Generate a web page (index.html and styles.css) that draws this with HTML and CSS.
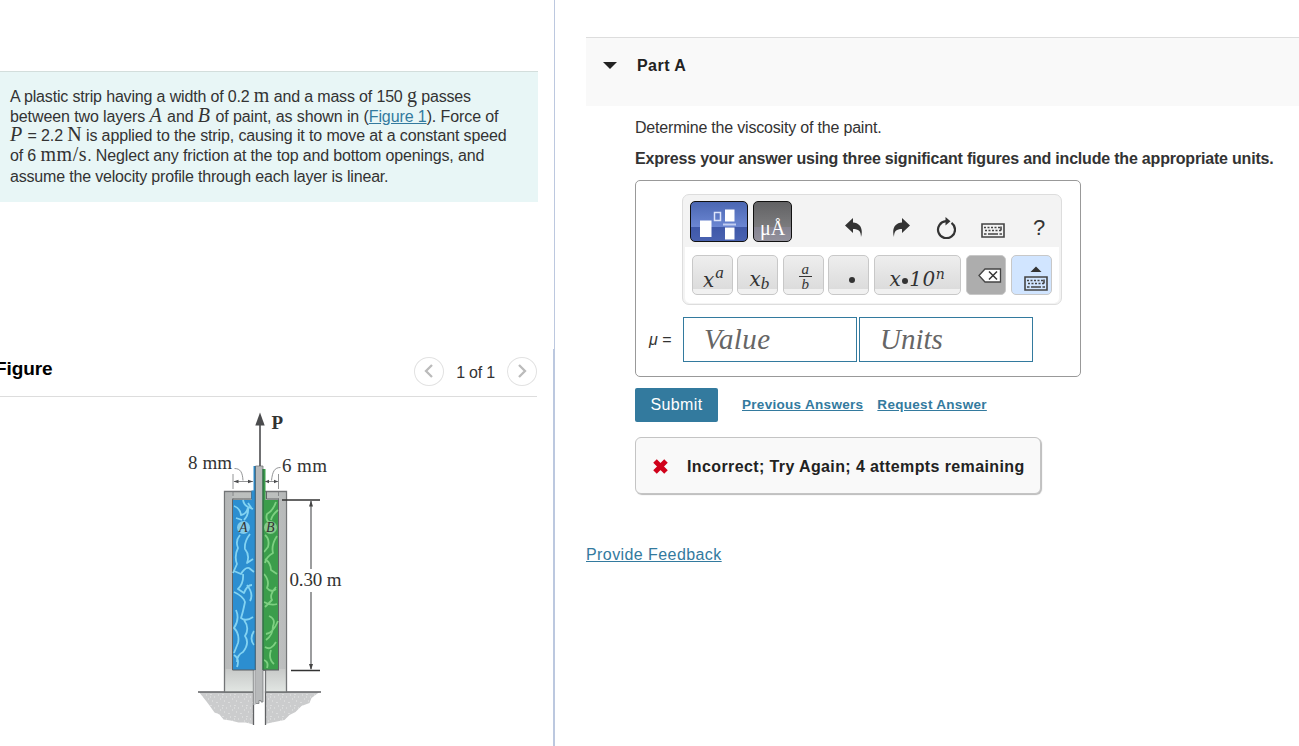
FILE: index.html
```html
<!DOCTYPE html>
<html lang="en">

<head>
  <meta charset="utf-8">
  <title>Part A</title>
  <link rel="stylesheet" href="styles.css">
</head>

<body>
  <div class="page">
    <div class="left">
      <div class="problem">
        <div class="line l1">A plastic strip having a width of 0.2 <span class="unit">m</span> and a mass of 150 <span class="unit">g</span> passes</div>
        <div class="line l2">between two layers <i class="var">A</i> and <i class="var">B</i> of paint, as shown in (<a href="#">Figure 1</a>). Force of</div>
        <div class="line l3"><i class="var">P</i> = 2.2 <span class="unit">N</span> is applied to the strip, causing it to move at a constant speed</div>
        <div class="line l4">of 6 <span class="unit">mm/s</span>. Neglect any friction at the top and bottom openings, and</div>
        <div class="line l5">assume the velocity profile through each layer is linear.</div>
      </div>

      <div class="figure-panel">
        <div class="figure-header">
          <h2>Figure</h2>
          <div class="pager">
            <button class="round"><svg width="10" height="14" viewBox="0 0 10 14"><path d="M8 1L2 7l6 6" /></svg></button>
            <span>1 of 1</span>
            <button class="round"><svg width="10" height="14" viewBox="0 0 10 14"><path d="M2 1l6 6-6 6" /></svg></button>
          </div>
        </div>

        <svg class="figure" width="180" height="340" viewBox="180 400 180 340">
          <defs>
            <linearGradient id="wall" x1="0" x2="1" y1="0" y2="0">
              <stop offset="0" stop-color="#a9abac" />
              <stop offset=".5" stop-color="#c9cbcc" />
              <stop offset="1" stop-color="#b0b2b3" />
            </linearGradient>
            <linearGradient id="base" x1="0" x2="0" y1="0" y2="1">
              <stop offset="0" stop-color="#bcbfbe" />
              <stop offset=".88" stop-color="#c6c8c7" />
              <stop offset="1" stop-color="#e2e6e3" />
            </linearGradient>
            <pattern id="gravel" width="12" height="11" patternUnits="userSpaceOnUse">
              <rect width="12" height="11" fill="#cbcccd" />
              <path d="M2 2h1M7 1v1M10 4h1M4 6h1M8 8h1M1 9v1M6 4h1" stroke="#e7e8e8" stroke-width="1.2" />
            </pattern>
          </defs>

          <!-- ground -->
          <path d="M199 692h54.500v32.500l-8-2-7 0-8-2-7-1-4-5-5-2-5-7-3-4-4-5z" fill="url(#gravel)" />
          <path d="M265 692h54.500l-8 6-2 5-8 3-6 6-6 3-5 5-10 2-9.500 2z" fill="url(#gravel)" />
          <path d="M198 692h55.500v33M265.500 725v-33H321" fill="none" stroke="#606264" stroke-width="1.300" />

          <!-- casing -->
          <path d="M224.500 491.500h62V692h-21v-22h-12v22h-29z" fill="url(#base)" stroke="#737577" stroke-width="1.300" />
          <path d="M225.500 492.500h6.500V669h-6.500zM279 492.500h6.500V669H279z" fill="url(#wall)" opacity=".5" />
          <path d="M251.500 491.500v7.500H232.500v171M266.500 491.500v7.500H278.500v171" fill="none" stroke="#606264" />

          <!-- paint -->
          <path d="M233 500h18.500v-9.500h2V466h2v204H233z" fill="#2c8ed0" />
          <path d="M263 469h2.500v31H278v170h-15z" fill="#3b9d4b" />
          <path class="wave-a" d="M234 506q6 2 7 9q6-1 7-8l5 2M243 500q1 5 5 7q1 8-4 13M248 503l4 6M236 518l6 2M240 535q-5 6-2 13q-4 8-1 16l-4 9M250 534q-6 8-5 15q5 6 2 14l6-4M234 571l7 3q4-7 8-6l5 4M243 574q1 9-5 15l6 4q3-8 8-8M234 592q9 4 11 10q-2 10-4 16q5 4 12-1M247 585q7 9 3 16M236 610q4 9-2 18q6 6 4 15l-4 10M244 620q6 8 1 16q5 7-2 16q-6 3-6 10M254 631q-5 8 0 14M234 655q6 4 3 12" />
          <path class="wave-b" d="M276 502q-3 9-9 12q-2 6 3 9M278 510q-6 5-7 10M265 535q5 4 3 12l-4 5M277 536q-6 9-4 17q-7 4-8 10M265 559q6 4 6 11l6 4M264 574q6 7 3 14q4 5 9 1M276 587q-7 8-4 13l-7 7M264 602q7 4 13 2M269 616q7 3 4 10q0 9-7 14M278 621q-5 12-12 13M265 647q6 4 11-5M271 650q-3 9 3 14M264 660q5 2 3 8" />

          <!-- strip -->
          <path d="M255.500 466h7.500v236h-2v-1.500h-2v3h-3.500z" fill="#b7b9ba" stroke="#77797b" stroke-width=".8" />
          <path d="M253.500 670h2v35h-2z" fill="#c8cacb" />
          <path d="M255.200 466v204" stroke="#285c7b" stroke-width=".8" />
          <path d="M263 469v201" stroke="#206f3a" stroke-width="1.200" />
          <path d="M232.500 670h22M263 670h16" stroke="#5b5d60" />

          <circle cx="243.500" cy="527.500" r="6.500" fill="#82cbea" />
          <circle cx="270.500" cy="527.500" r="6.500" fill="#86c98c" />
          <text class="tag" x="239" y="532">A</text>
          <text class="tag" x="266" y="532">B</text>

          <!-- force -->
          <path d="M260 466v-42" stroke="#4b4c4e" stroke-width="1.600" />
          <path d="M260 412.500l4.700 13h-9.400z" fill="#4b4c4e" />
          <text class="force" x="271.500" y="429">P</text>

          <!-- dimensions -->
          <path d="M233 474v26M278.500 474v26" stroke="#77797b" stroke-width=".8" stroke-dasharray="15 2 5 2" />
          <path d="M234 481.500h19M265 481.500h13" stroke="#77797b" stroke-width=".8" />
          <path d="M233.500 481.500l5-1.700v3.400zM253 481.500l-5-1.700v3.400zM265 481.500l4-1.700v3.400zM278 481.500l-4-1.700v3.400z" fill="#4b4c4e" />
          <path d="M234.500 468.500c6 0 8 4 8.500 12M280.500 467.500c-6 0-8 4-9 13" fill="none" stroke="#77797b" stroke-width=".8" />
          <path d="M282 500h38M291 670.500h29" stroke="#333" stroke-width="1.300" />
          <path d="M311 501v68M311 592v77" stroke="#67696b" stroke-width="1.300" />
          <path d="M311 500.500l2 6h-4zM311 670l2-6h-4z" fill="#444" />
          <text class="dim" x="188" y="469" textLength="44">8 mm</text>
          <text class="dim" x="282" y="472" textLength="45">6 mm</text>
          <text class="dim" x="289.500" y="586" textLength="52">0.30 m</text>
        </svg>
      </div>
    </div>

    <div class="right">
      <div class="part-header">
        <span class="caret"></span>
        <h3>Part A</h3>
      </div>

      <div class="part-body">
        <p class="question">Determine the viscosity of the paint.</p>
        <p class="instructions">Express your answer using three significant figures and include the appropriate units.</p>

        <div class="answer-box">
          <div class="toolbar">
            <div class="tools-top">
              <button class="template">
                <svg width="56" height="39" viewBox="0 0 56 39">
                  <path d="M9 18.500h11.500v16.500H9zM34 7.500h9.500v12H34zM34 25.500h9.500v12H34z" fill="#fff" />
                  <path d="M23.500 10.500h6v8h-6z" fill="none" stroke="#dce4fa" stroke-width="1.500" />
                  <path d="M32 22.500h13" stroke="#c3cff2" stroke-width="2" />
                </svg>
              </button>
              <button class="symbols">μÅ</button>
              <div class="actions">
                <svg width="18" height="20" viewBox="0 0 18 20"><path d="M0 7.500L8 0v4.500c7 .5 10.500 6 8 14.500 0-6-2.500-8-8-8V15z" fill="#333" /></svg>
                <svg width="18" height="20" viewBox="0 0 18 20"><path d="M17 7.500L9 0v4.500C2 5-1.500 10.500 1 19c0-6 2.500-8 8-8V15z" fill="#333" /></svg>
                <svg width="20" height="22" viewBox="0 0 20 22">
                  <path d="M15.500 5.800A8.500 8.500 0 1 1 10 4.200" fill="none" stroke="#333" stroke-width="2.200" />
                  <path d="M9.500 0l5 4.200-5 4.300z" fill="#333" />
                </svg>
                <svg class="kbd" width="24" height="15" viewBox="0 0 24 15">
                  <path d="M1 1h22v13H1z" />
                  <path d="M3 4.500h16M4 7.500h16" stroke-dasharray="2 1.500" />
                  <path d="M3 11h2.500M7 11h10M18.500 11H21M20 3.500v4" />
                </svg>
                <span class="help">?</span>
              </div>
            </div>

            <div class="tools-bottom">
              <button class="key"><span class="math sup"><b>x</b><i>a</i></span></button>
              <button class="key"><span class="math sub"><b>x</b><i>b</i></span></button>
              <button class="key"><span class="frac"><i>a</i><i>b</i></span></button>
              <button class="key"><span class="dot"></span></button>
              <button class="key wide"><span class="sci">x<span class="dot"></span>10<sup>n</sup></span></button>
              <button class="key delete">
                <svg width="24" height="15" viewBox="0 0 24 15">
                  <path d="M1 7.500L7 1h15.500v13H7z" fill="#fff" stroke="#444" stroke-width="1.300" />
                  <path d="M11 3.500l8 8M19 3.500l-8 8" stroke="#333" stroke-width="1.500" />
                </svg>
              </button>
              <button class="key toggle">
                <svg class="kbd" width="24" height="25" viewBox="0 -10 24 25">
                  <path class="up" d="M6.500-4l5.500-5.500L17.500-4z" />
                  <path d="M1 1h22v13H1z" />
                  <path d="M3 4.500h16M4 7.500h16" stroke-dasharray="2 1.500" />
                  <path d="M3 11h2.500M7 11h10M18.500 11H21M20 3.500v4" />
                </svg>
              </button>
            </div>
          </div>

          <div class="entry">
            <label><i>μ</i> =</label>
            <div class="field value">Value</div>
            <div class="field">Units</div>
          </div>
        </div>

        <div class="submit-row">
          <button class="submit">Submit</button>
          <a href="#">Previous Answers</a>
          <a href="#">Request Answer</a>
        </div>

        <div class="result">
          <svg width="17" height="17" viewBox="0 0 17 17"><path d="M3 3l11 11M14 3L3 14" stroke="#d0021b" stroke-width="5" /></svg>
          <span>Incorrect; Try Again; 4 attempts remaining</span>
        </div>
      </div>

      <a class="feedback" href="#">Provide Feedback</a>
    </div>
  </div>
</body>

</html>
```

FILE: styles.css
```css
* {
  box-sizing: border-box;
}

body {
  margin: 0;
  font-family: "Liberation Sans", Arial, sans-serif;
  font-size: 16px;
  color: #333;
  background: #fff;
  overflow: hidden;
}

a {
  color: #337a9e;
}

button {
  padding: 0;
  font-family: inherit;
}

svg {
  display: block;
  flex: none;
}

.page {
  display: flex;
  height: 746px;
}

.left {
  width: 555px;
  flex: none;
  padding-top: 71px;
  border-right: 1px solid #bcc8df;
}

/* problem statement */
.problem {
  width: 538px;
  height: 131px;
  padding: 15px 0 0 10px;
  border-top: 1px solid #d3dedc;
  background: #e8f6f6;
}

.line {
  height: 20px;
  line-height: 20px;
  white-space: nowrap;
  letter-spacing: -0.18px;
}

.l1 {
  letter-spacing: -0.16px;
}

.l2 {
  height: 19px;
  letter-spacing: -0.1px;
}

.l3 {
  letter-spacing: -0.13px;
}

.l4 {
  height: 21px;
  letter-spacing: -0.15px;
}

.unit,
.var {
  font-family: "Liberation Serif", serif;
  font-size: 20px;
  line-height: 1px;
  letter-spacing: 0;
}

.var {
  letter-spacing: 1px;
}

.l4 .unit {
  letter-spacing: 0.6px;
}

/* figure */
.figure-panel {
  height: 397px;
  margin-top: 147px;
  border-right: 1px solid #bcc8df;
}

.figure-header {
  display: flex;
  justify-content: space-between;
  width: 537px;
  height: 48px;
  border-bottom: 1px solid #ddd;
}

h2 {
  margin: 9px 0 0 -5px;
  font-size: 19px;
  line-height: 22px;
  letter-spacing: -0.1px;
  color: #000;
}

.pager {
  display: flex;
  align-items: center;
  gap: 12px;
  height: 30px;
  margin-top: 7px;
}

.pager span {
  padding-top: 3px;
  letter-spacing: -0.2px;
}

.round {
  display: flex;
  align-items: center;
  justify-content: center;
  width: 30px;
  height: 29px;
  border: 1px solid #e2e2e2;
  border-radius: 50%;
  background: #fff;
}

.round path {
  fill: none;
  stroke: #bbb;
  stroke-width: 2.3;
}

.figure {
  margin: 3px 0 0 180px;
}

.figure text {
  font-family: "Liberation Serif", serif;
  fill: #333;
}

.figure .dim {
  font-size: 19px;
}

.figure .force {
  font-size: 19px;
  font-weight: bold;
}

.figure .tag {
  font-size: 14px;
  font-style: italic;
}

.wave-a,
.wave-b {
  fill: none;
  stroke: #83d3f2;
  stroke-width: 1.8;
  stroke-linejoin: round;
}

.wave-b {
  stroke: #7ed082;
}

/* right column */
.right {
  flex: 1;
  padding: 37px 0 0 31px;
}

.part-header {
  display: flex;
  height: 69px;
  padding: 17px 0 0 17px;
  border-top: 1px solid #ddd;
  background: #f9f9f9;
}

.caret {
  margin: 7px 20px 0 0;
  border: 7px solid transparent;
  border-top: 7px solid #222;
  border-bottom: 0;
  height: 0;
}

h3 {
  margin: 1px 0 0;
  font-size: 16px;
  line-height: 20px;
  letter-spacing: 0.45px;
  color: #222;
}

.part-body {
  padding: 12px 0 0 49px;
  white-space: nowrap;
}

.question {
  margin: 0;
  line-height: 20px;
  letter-spacing: -0.19px;
}

.instructions {
  margin: 11px 0;
  line-height: 20px;
  letter-spacing: -0.195px;
  font-weight: bold;
}

.answer-box {
  width: 446px;
  height: 197px;
  padding: 13px 0 0 12px;
  border: 1px solid #999;
  border-radius: 5px;
}

.toolbar {
  width: 380px;
  height: 111px;
  margin-left: 34px;
  padding: 0 2px 2px;
  border: 1px solid #ddd;
  border-radius: 7px;
  background: #f3f3f3;
}

.tools-top {
  display: flex;
  gap: 5px;
  height: 52px;
  padding: 6px 0 0 5px;
}

.template,
.symbols {
  width: 58px;
  height: 41px;
  border: 1px solid #111;
  border-radius: 5px;
  background: linear-gradient(#4b67b2, #6b86d2 63%, #3f58a8 63%, #4962b1);
}

.symbols {
  width: 39px;
  padding-top: 13px;
  background: linear-gradient(#626264, #7b7b7d 63%, #858390 63%, #93919c);
  color: #fff;
  font: 20px/22px "Liberation Serif", serif;
}

.actions {
  display: flex;
  align-items: center;
  height: 40px;
  margin: 7px 0 0 48px;
}

.actions svg {
  margin-right: 30px;
}

.actions svg:nth-child(2) {
  margin-right: 25px;
}

.actions svg:nth-child(3) {
  margin-right: 25px;
}

.actions .kbd {
  margin: 4px 28px 0 0;
}

.kbd path {
  fill: none;
  stroke: #444;
  stroke-width: 1.6;
}

.kbd .up {
  fill: #333;
  stroke: none;
}

.help {
  font-size: 22px;
}

.tools-bottom {
  display: flex;
  gap: 4.8px;
  height: 56px;
  padding: 8px 0 0 7px;
  background: #fff;
  border-radius: 0 0 5px 5px;
}

.key {
  display: flex;
  align-items: center;
  justify-content: center;
  width: 40.7px;
  height: 40px;
  padding: 10px 0 0;
  border: 1px solid #c8c8c8;
  border-radius: 5px;
  background: linear-gradient(#eee, #dcdcdc 86%, #f1f1f1 86%);
  color: #333;
}

.key.wide {
  width: 87px;
}

.key.delete {
  padding: 0 0 0 7px;
  background: #adadad;
}

.key.toggle {
  padding: 6px 0 0 8px;
  background: #d1e5ff;
}

.math {
  display: flex;
}

.math b {
  font: italic 20px/20px "DejaVu Serif", serif;
}

.math i {
  font: italic 17px/20px "Liberation Serif", serif;
}

.sup {
  margin-left: 2px;
}

.sup i {
  margin: -7px 0 0 1px;
}

.sub {
  margin: 3px 0 0 3px;
}

.sub i {
  margin-top: 5px;
}

.frac {
  display: flex;
  flex-direction: column;
  margin: -6px 0 0 4px;
  font: 15px/14px "Liberation Serif", serif;
}

.frac i {
  width: 13px;
}

.frac i:first-child {
  height: 14px;
  line-height: 12px;
  border-bottom: 1px solid #333;
}

.dot {
  width: 6px;
  height: 6px;
  margin: 0 1px;
  border-radius: 50%;
  background: #333;
}

.key > .dot {
  margin-left: 7px;
}

.sci {
  display: flex;
  align-items: center;
  margin-top: -3px;
  font: italic 20px/20px "DejaVu Serif", serif;
  letter-spacing: 0.5px;
}

.sci .dot {
  margin-top: 4px;
}

.sci sup {
  margin-top: -10px;
  font-size: 14px;
}

/* value and units */
.entry {
  display: flex;
  align-items: center;
  gap: 2px;
  margin-top: 12px;
}

.entry label {
  width: 33px;
  padding-left: 1px;
}

.field {
  width: 174px;
  height: 45px;
  padding-left: 20px;
  border: 1px solid #337a9e;
  color: #666;
  font: italic 29px/43px "Liberation Serif", serif;
}

.value {
  letter-spacing: 0.4px;
}

.submit-row {
  display: flex;
  align-items: center;
  height: 34px;
  margin-top: 11px;
}

.submit {
  width: 83px;
  height: 34px;
  margin-right: 24px;
  border: 0;
  border-radius: 2px;
  background: #337a9e;
  color: #fff;
  font-size: 16px;
  letter-spacing: 0.35px;
}

.submit-row a {
  margin: -2px 14px 0 0;
  font-size: 13.5px;
  letter-spacing: 0.3px;
  font-weight: bold;
}

.result {
  display: flex;
  align-items: center;
  gap: 18px;
  width: 406px;
  height: 57px;
  margin-top: 15px;
  padding: 2px 0 0 16px;
  border: 1px solid #c4c4c4;
  border-radius: 6px;
  background: #f9f9f9;
  box-shadow: 1px 1px 1px #bbb;
  color: #222;
  font-weight: bold;
  letter-spacing: 0.39px;
}

.feedback {
  display: inline-block;
  margin-top: 51px;
  line-height: 20px;
  letter-spacing: 0.42px;
}
```
